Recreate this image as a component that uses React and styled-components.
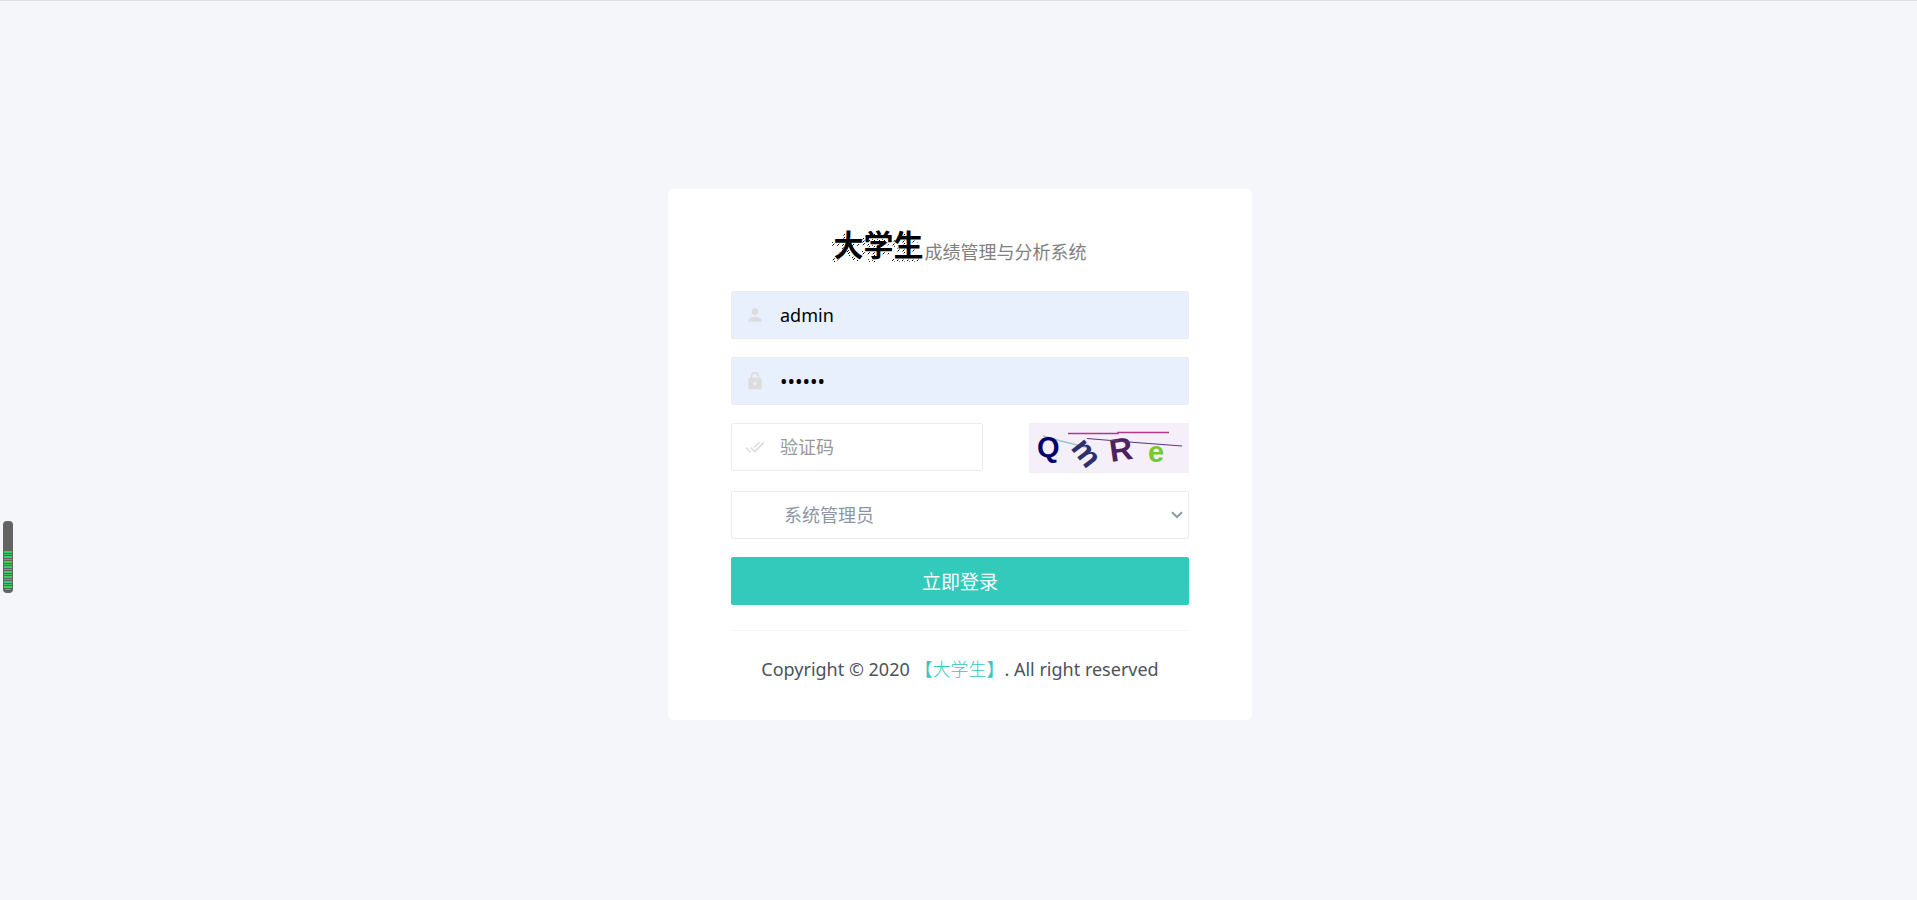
import React, { useState } from 'react';
import styled, { createGlobalStyle } from 'styled-components';
import { MdPerson, MdLock, MdDoneAll } from 'react-icons/md';

const fontStack = '"Noto Sans", "Noto Sans CJK SC", sans-serif';

const App = () => {
  const [name, setName] = useState('admin');
  const [password, setPassword] = useState('123456');
  const [code, setCode] = useState('');
  const [role, setRole] = useState('admin');

  const login = (e) => {
    e.preventDefault();
  };

  return (
    <React.Fragment>
      <GlobalStyle />
      <Page>
        <Card>
          <Title>
            <Brand data-text="大学生">大学生</Brand>
            <SubTitle>成绩管理与分析系统</SubTitle>
          </Title>
          <Form onSubmit={login}>
            <Field $filled>
              <MdPerson size={20} />
              <Input aria-label="用户名" value={name} onChange={(e) => setName(e.target.value)} />
            </Field>
            <Field $filled>
              <MdLock size={20} />
              <Input
                type="password"
                aria-label="密码"
                value={password}
                onChange={(e) => setPassword(e.target.value)}
              />
            </Field>
            <CodeRow>
              <Field>
                <MdDoneAll size={20} />
                <Input
                  aria-label="验证码"
                  placeholder="验证码"
                  value={code}
                  onChange={(e) => setCode(e.target.value)}
                />
              </Field>
              <Captcha />
            </CodeRow>
            <SelectBox>
              <Select aria-label="角色" value={role} onChange={(e) => setRole(e.target.value)}>
                <option value="admin">系统管理员</option>
                <option value="teacher">教师</option>
                <option value="student">学生</option>
              </Select>
              <Arrow viewBox="0 0 12 8" aria-hidden="true">
                <path d="M1 1.2 L6 6 L11 1.2" fill="none" stroke="#8d9bab" strokeWidth="2" />
              </Arrow>
            </SelectBox>
            <LoginButton type="submit">立即登录</LoginButton>
          </Form>
          <Footer>
            Copyright © 2020 <FooterLink href="#">【大学生】</FooterLink>. All right reserved
          </Footer>
        </Card>
      </Page>
      <Meter />
    </React.Fragment>
  );
};

const Captcha = () => (
  <CaptchaImage viewBox="0 0 160 50" role="img" aria-label="验证码图片">
    <rect width="160" height="50" fill="#f5effa" />
    <path d="M14 13 L32 18 L60 25" fill="none" stroke="#9cc5c9" strokeWidth="1.5" />
    <text transform="translate(8 34)" fill="#000070">Q</text>
    <text transform="translate(41 25) rotate(52)" fill="#2f2f70" fontSize="31">m</text>
    <text transform="translate(82 39) rotate(-8)" fill="#4e205c" fontSize="32">R</text>
    <text transform="translate(119 39)" fill="#78c832">e</text>
    <path d="M39 10.5 H89 V9.5 H140" fill="none" stroke="#b2388a" strokeWidth="1.5" />
    <path d="M58 15.5 L100 19 L153 23" fill="none" stroke="#5f3580" strokeWidth="1.2" />
  </CaptchaImage>
);

// 左侧的音量条
const Meter = () => (
  <MeterImage viewBox="0 0 10 72" aria-hidden="true">
    <rect width="10" height="72" rx="4" fill="#636363" />
    <path d="M1 31 H9 M1 36 H9 M1 41 H9 M1 46 H9 M1 51 H9 M1 56 H9 M1 61 H9 M1 66 H9" stroke="#35d461" strokeWidth="2" />
    <path d="M1 33.5 H9 M1 38.5 H9 M1 43.5 H9 M1 48.5 H9 M1 53.5 H9 M1 58.5 H9 M1 63.5 H9 M2 68.5 H8" stroke="#57b46e" strokeWidth="1" />
  </MeterImage>
);

const GlobalStyle = createGlobalStyle`
  * {
    box-sizing: border-box;
  }

  body {
    margin: 0;
    color: #4d5259;
    background-color: #f5f6fa;
    font-family: ${fontStack};
    font-size: 18px;
  }
`;

const Page = styled.main`
  min-height: 100vh;
  padding: 8px 0 0 3px;
  display: flex;
  align-items: center;
  justify-content: center;
  border-top: 1px solid #dcdee3;
`;

const Card = styled.div`
  width: 584px;
  max-width: 100%;
  padding: 36px 63px;
  border-radius: 5px;
  background-color: white;
`;

const Title = styled.h1`
  margin: 0 0 26px;
  display: flex;
  align-items: flex-start;
  justify-content: center;
  gap: 1px;
  font-weight: normal;
`;

const Brand = styled.span`
  position: relative;
  z-index: 0;
  color: black;
  font-size: 30px;
  font-weight: bold;
  line-height: 40px;
  text-shadow: -1px 1px white;

  /* 斜纹阴影 */
  &::after {
    content: attr(data-text);
    position: absolute;
    top: 3px;
    left: -3px;
    z-index: -1;
    color: transparent;
    text-shadow: none;
    background-image: linear-gradient(-45deg, transparent 40%, black 40%, black 60%, transparent 0);
    background-size: 5px 3px;
    background-clip: text;
  }
`;

const SubTitle = styled.span`
  margin-top: 15px;
  color: gray;
  font-size: 18px;
  line-height: 24px;
`;

const Form = styled.form`
  display: flex;
  flex-direction: column;
  gap: 18px;
`;

const Field = styled.label`
  height: 48px;
  padding-left: 13px;
  display: flex;
  flex: none;
  align-items: center;
  gap: 15px;
  color: #dcdcdc;
  border: 1px solid #ebebeb;
  border-radius: 2px;
  background-color: ${(props) => (props.$filled ? '#e8f0fe' : 'white')};
`;

const Input = styled.input`
  min-width: 0;
  flex: 1;
  height: 100%;
  padding: 0;
  border: 0;
  outline: none;
  color: black;
  background: transparent;
  font: inherit;

  &::placeholder {
    color: #999999;
  }

  &[type='password'] {
    font-size: 20px;
  }
`;

const CodeRow = styled.div`
  display: grid;
  grid-template-columns: 252px 160px;
  justify-content: space-between;
`;

const CaptchaImage = styled.svg`
  width: 160px;
  height: 50px;
  font-family: "Liberation Sans", sans-serif;
  font-size: 29px;
  font-weight: bold;
`;

const SelectBox = styled.div`
  height: 48px;
  display: grid;
  align-items: center;
  border: 1px solid #ebebeb;
  border-radius: 2px;
`;

const Select = styled.select`
  grid-area: 1 / 1;
  width: 100%;
  height: 100%;
  padding: 0 52px;
  border: 0;
  outline: none;
  appearance: none;
  color: #8b95a5;
  background: transparent;
  font: inherit;
`;

const Arrow = styled.svg`
  grid-area: 1 / 1;
  justify-self: end;
  width: 12px;
  height: 8px;
  margin-right: 5px;
  pointer-events: none;
`;

const LoginButton = styled.button`
  height: 48px;
  border: 0;
  border-radius: 2px;
  color: white;
  background-color: #33cabb;
  font: inherit;
  font-size: 19px;
  cursor: pointer;
`;

const Footer = styled.footer`
  margin-top: 25px;
  padding: 24px 0 1px;
  border-top: 1px solid #f3f4f5;
  line-height: 28px;
  text-align: center;
  white-space: nowrap;
`;

const FooterLink = styled.a`
  color: #33cabb;
  font-weight: 300;
  text-decoration: none;
`;

const MeterImage = styled.svg`
  position: fixed;
  top: 521px;
  left: 3px;
  width: 10px;
  height: 72px;
`;

export default App;
